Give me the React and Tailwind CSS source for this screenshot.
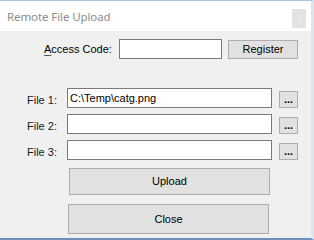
import React from 'react';

const Button = ({ children, className = '' }) => (
    <button className={`bg-[#e1e1e1] border border-[#adadad] text-black flex items-center justify-center leading-none ${className}`}>
        {children}
    </button>
);

const FileRow = ({ label, value = '' }) => (
    <div className="flex items-start h-[20px]">
        <span className="w-[40px] pt-[4px] text-[#1a1a1a]">{label}</span>
        <div className="w-[205px] h-[20px] bg-white border border-[#7a7a7a] pl-[2px] flex items-center">
            {value}
        </div>
        <Button className="ml-[7px] mt-[3px] w-[19px] h-[17px] font-bold text-[11px] pb-[2px] items-end">...</Button>
    </div>
);

export default function App() {
    return (
        <div className="w-[314px] h-[240px] bg-[#f0f0f0] flex flex-col border-t border-t-[#aac4e6] border-r-[3px] border-r-[#dce6f2] border-b-2 border-b-[#6f8fb8] font-['Liberation_Sans',Arial,sans-serif] text-[11px] text-black">
            {/* title bar */}
            <div className="h-[30px] bg-white flex items-start justify-between pl-[7px] pr-[5px]">
                <span className="mt-[10px] font-['Noto_Sans',sans-serif] text-[11.5px] tracking-[-0.1px] text-[#8c8c8c] leading-none">Remote File Upload</span>
                <div className="mt-[8px] w-[14px] h-[19px] bg-[#e3e3e3] flex items-center justify-center text-[8px] text-[#f4f4f4]">x</div>
            </div>

            {/* access code */}
            <div className="flex items-center mt-[8px] pl-[44px]">
                <span className="w-[75px]"><span className="underline underline-offset-2 decoration-[#555]">A</span>ccess Code:</span>
                <div className="w-[103px] h-[20px] bg-white border border-[#7a7a7a]" />
                <Button className="ml-[6px] w-[70px] h-[19px]">Register</Button>
            </div>

            {/* files */}
            <div className="flex flex-col gap-[6px] mt-[29px] pl-[27px]">
                <FileRow label="File 1:" value="C:\Temp\catg.png" />
                <FileRow label="File 2:" />
                <FileRow label="File 3:" />
            </div>

            {/* actions */}
            <div className="flex flex-col mt-[8px]">
                <Button className="ml-[69px] w-[201px] h-[27px]">Upload</Button>
                <Button className="ml-[68px] mt-[9px] w-[201px] h-[30px]">Close</Button>
            </div>
        </div>
    );
}
